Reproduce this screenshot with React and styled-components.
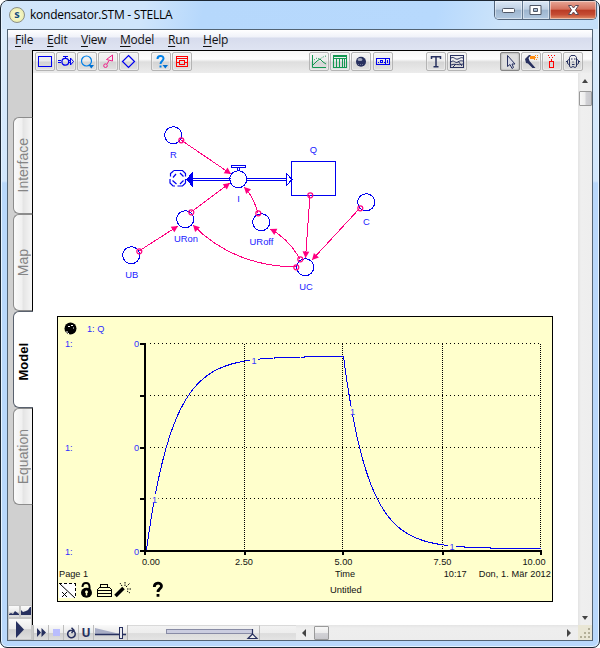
import React from 'react';
import styled, { createGlobalStyle, css } from 'styled-components';

const Global = createGlobalStyle`
  * { box-sizing: border-box; }
  body { margin: 0; background: #fff; font-family: "Liberation Sans", Arial, sans-serif; }
  svg { display: block; flex: none; }
`;

const BLUE = '#0000f0';
const PINK = '#ff0080';
const NAVY = '#27305f';
const PAPER = '#ffffcc';

const Window = styled.div`
  width: 600px;
  height: 648px;
  display: flex;
  flex-direction: column;
  padding: 0 6px 6px;
  border: 1px solid #1c2733;
  border-radius: 8px 7px 7px 7px;
  box-shadow: inset 0 0 0 1px #e6f3ff;
  background: linear-gradient(180deg, #dcecfb 0, #d2e7fc 180px, #b9d8fb 182px, #b9d8fb 100%);
  overflow: hidden;
`;

const TitleBar = styled.header`
  display: flex;
  height: 28px;
  flex: none;
  margin: 0 -5px;
  padding-left: 7px;
  background: linear-gradient(100deg, #d2e6fa 0, #cfe5fb 140px, #b6d8fc 200px, #b7d9fd 430px, #cde4fa 500px, #c4dff9 100%);
`;

const AppBadge = styled.div`
  width: 16px;
  height: 16px;
  margin-top: 6px;
  border: 1px solid #8c8f86;
  border-radius: 50%;
  background: radial-gradient(#ffffe0, #e3e69a);
  color: #15507c;
  font: bold 11px/12px "Open Sans", sans-serif;
  text-align: center;
`;

const Title = styled.h1`
  margin: 0 0 0 5px;
  font: 12px/28px "Open Sans", sans-serif;
  letter-spacing: -0.25px;
  color: #000;
  flex: 1;
`;

const Caption = styled.div`
  display: flex;
  width: 103px;
  height: 19px;
  margin-right: 1px;
  border: 1px solid #52657b;
  border-top: 0;
  border-radius: 0 0 5px 5px;
  overflow: hidden;
`;

const CaptionButton = styled.button`
  flex: ${p => (p.$close ? '0 0 47px' : '1')};
  display: flex;
  justify-content: center;
  align-items: center;
  padding: 0;
  border: 0;
  border-left: ${p => (p.$first ? '0' : '1px solid #647990')};
  box-shadow: inset 0 0 0 1px rgba(255, 255, 255, 0.45);
  background: ${p =>
    p.$close
      ? 'linear-gradient(180deg, #e7a797 0, #d4705c 46%, #b93a24 50%, #c54c34 75%, #e18e68 100%)'
      : 'linear-gradient(180deg, #dce9f7 0, #bfd0e3 46%, #9db5ce 50%, #b1c8e0 100%)'};
`;

const Client = styled.div`
  flex: 1;
  display: flex;
  flex-direction: column;
  min-height: 0;
  border: 1px solid #536474;
  background: #fff;
`;

const MenuBar = styled.nav`
  display: flex;
  height: 20px;
  flex: none;
  padding-left: 7px;
  background: linear-gradient(180deg, #fff 0, #f0f2f9 7px, #d7dced 8px, #dfe4f2 100%);
`;

const MenuItem = styled.span`
  width: ${p => p.$w}px;
  font: 12px/20px "Open Sans", sans-serif;
  letter-spacing: -0.2px;
  color: #111;
  &::first-letter { text-decoration: underline; text-underline-offset: 1.5px; }
`;

const Body = styled.div`
  flex: 1;
  display: flex;
  min-height: 0;
`;

const Sidebar = styled.aside`
  width: 25px;
  flex: none;
  display: flex;
  flex-direction: column;
  background: #d0d0d0;
`;

const TabList = styled.div`
  flex: 1;
  padding-top: 67px;
  background: linear-gradient(#000, #000) right / 1px 100% no-repeat;
`;

const Tab = styled.div`
  display: flex;
  align-items: center;
  justify-content: center;
  height: 97px;
  margin-left: 5px;
  padding-top: ${p => (p.$active ? 5 : 0)}px;
  border: 1px solid ${p => (p.$active ? '#59616e' : '#8c8c8c')};
  border-right: ${p => (p.$active ? '0' : '1px solid #000')};
  border-radius: 6px 0 0 6px;
  background: ${p => (p.$active ? '#fff' : 'linear-gradient(90deg, #fafafa 0, #f0f0f0 45%, #e4e4e4 50%, #f6f6f6 100%)')};
  span {
    writing-mode: vertical-rl;
    transform: rotate(180deg);
    font-size: ${p => (p.$active ? 13 : 14)}px;
    font-weight: ${p => (p.$active ? 'bold' : 'normal')};
    line-height: 18px;
    color: ${p => (p.$active ? '#000' : '#858585')};
  }
`;

const RunPad = styled.div`
  display: grid;
  grid-template-columns: 12px 12px;
  grid-template-rows: 13px 22px;
  background: linear-gradient(#000, #000) right top / 1px 20px no-repeat #c8c8c8;
`;

const metal = css`
  background: linear-gradient(180deg, #fafafa 0, #ebebeb 50%, #cfcfcf 53%, #dedede 100%);
`;

const PadKey = styled.button`
  ${metal}
  display: flex;
  justify-content: center;
  align-items: center;
  padding: 0;
  border: 1px solid #c6c6c6;
  grid-column: ${p => (p.$wide ? '1 / 3' : 'auto')};
`;

const Main = styled.main`
  flex: 1;
  display: flex;
  flex-direction: column;
  min-width: 0;
`;

const Toolbar = styled.div`
  display: flex;
  align-items: center;
  height: 23px;
  flex: none;
  padding: 1px 8px 2px 2px;
  border-top: 1px solid #000;
  background: linear-gradient(180deg, #f6f6f6 0, #fdfdfd 8px, #dedede 11px, #ececec 100%);
`;

const ToolGroup = styled.div`
  display: flex;
  gap: 1px;
  margin-left: ${p => p.$gap || 0}px;
`;

const ToolButton = styled.button`
  width: 20px;
  height: 19px;
  display: flex;
  justify-content: center;
  align-items: center;
  padding: 0;
  border: 1px solid ${p => (p.$pressed ? '#858585' : '#b4b4b4')};
  border-radius: 2px;
  box-shadow: ${p => (p.$pressed ? 'inset 0 0 2px #888' : 'inset 0 0 0 1px rgba(255,255,255,.35)')};
  background: ${p =>
    p.$pressed
      ? '#dedede'
      : 'linear-gradient(180deg, #f4f4f4 0, #ececec 48%, #d3d3d3 52%, #e2e2e2 100%)'};
`;

const Stage = styled.div`
  flex: 1;
  display: flex;
  min-height: 0;
`;

const Canvas = styled.div`
  position: relative;
  flex: 1;
  background: #fff;
  overflow: hidden;
`;

const Graph = styled.section`
  position: absolute;
  left: 24px;
  top: 243px;
  width: 496px;
  height: 286px;
  border: 1px solid #000;
  background: ${PAPER};
  font-size: 9.2px;
  color: #111;
`;

const GraphHead = styled.div`
  display: flex;
  align-items: center;
  height: 22px;
  padding: 1px 0 0 6px;
  gap: 10px;
  color: #2c2cff;
`;

const GraphInfo = styled.div`
  display: grid;
  grid-template-columns: 276px 1fr auto auto;
  height: 12px;
  line-height: 12px;
  padding: 0 1px;
  white-space: nowrap;
`;

const Clock = styled.span`
  margin-right: 12px;
`;

const Stamp = styled.span`
  letter-spacing: 0.08px;
`;

const GraphTools = styled.div`
  display: flex;
  align-items: center;
  height: 19px;
`;

const GraphTitle = styled.span`
  margin-left: 162px;
  padding-bottom: 1px;
  font-size: 9.4px;
`;

const VScroll = styled.div`
  display: flex;
  flex-direction: column;
  align-items: center;
  width: 14px;
  flex: none;
  padding: 5px 0 4px;
  background: linear-gradient(90deg, #e3e3e3 0, #efefef 3px, #eee 100%);
`;

const Thumb = styled.div`
  width: ${p => p.$w}px;
  height: ${p => p.$h}px;
  border: 1px solid #9a9a9a;
  border-radius: 1px;
  background: linear-gradient(${p => p.$dir}, #f7f7f7 0, #ececec 48%, #d2d2d6 52%, #c8c8cc 100%);
`;

const Spacer = styled.div`
  flex: ${p => (p.$w ? `0 0 ${p.$w}px` : '1')};
`;

const BottomBar = styled.div`
  display: flex;
  height: 15px;
  flex: none;
`;

const RunKey = styled.button`
  ${metal}
  width: 15px;
  flex: none;
  display: flex;
  align-items: center;
  justify-content: center;
  padding: 0;
  border: 0;
  border-left: 1px solid #bdbdbd;
  color: ${NAVY};
  font: bold 12px/14px "Open Sans", sans-serif;
`;

const SpeedCell = styled.div`
  ${metal}
  width: 35px;
  border-left: 1px solid #bdbdbd;
  border-right: 1px solid #b5b5b5;
`;

const TimeCell = styled.div`
  width: 132px;
  border-top: 1px solid #d9d9d9;
  border-right: 1px solid #bdbdbd;
  background: linear-gradient(180deg, #f2f2f2 0, #ededed 50%, #dcdcdc 54%, #e4e4e4 100%);
`;

const RestCell = styled(TimeCell)`
  width: 36px;
  border-right: 0;
`;

const HScroll = styled.div`
  flex: 1;
  display: flex;
  align-items: center;
  padding: 0 6px 0 5px;
  background: linear-gradient(180deg, #e4e4e4 0, #eee 3px, #ededed 100%);
`;

const Grip = styled.div`
  width: 14px;
  background: #e9e6d5;
`;

const Icon = ({ children, w = 16, h = 15, s = BLUE }) => (
  <svg width={w} height={h} viewBox={`0 0 ${w} ${h}`} fill="none" stroke={s} strokeWidth="1">
    {children}
  </svg>
);

const icons = {
  stock: <Icon><rect x="1.5" y="2.5" width="13" height="10" shapeRendering="crispEdges" /></Icon>,
  flow: (
    <Icon>
      <path d="M0 6.5h3M0 8.5h3M11 6.5h2M11 8.5h2M5 2.5h5M7.5 2.5v2M12.5 4v7l3-3.5z" />
      <circle cx="7.3" cy="7.8" r="3.4" strokeWidth="1.3" />
    </Icon>
  ),
  converter: (
    <Icon s="#0080e8">
      <circle cx="7.5" cy="7" r="5" strokeWidth="1.2" />
      <path d="M9.5 11h5.5l-2.7 3.5z" fill="#0070d0" stroke="none" />
    </Icon>
  ),
  connector: (
    <Icon s="#ee2088">
      <path d="M12.5 1v6L6.500 5.500zM9 6.500 7 10" />
      <circle cx="5.5" cy="11.7" r="1.8" />
    </Icon>
  ),
  decision: <Icon><path d="M7.5 1.5 13.5 7.5 7.5 13.5 1.5 7.5z" strokeWidth="1.2" /></Icon>,
  help: (
    <Icon s="#0080e8">
      <path d="M4.5 5c0-4 6-4 6-.5 0 2.5-3 2.5-3 5.500M7.5 11.5v2" strokeWidth="2" />
      <path d="M9.5 11h5.5l-2.7 3.5z" fill="#0070d0" stroke="none" />
    </Icon>
  ),
  frame: (
    <Icon s="#f00">
      <path d="M2.5 2.5h11v10h-11zM2 4.5h12M5.5 6.5h5v4h-5zM3 8.5h3M10 8.5h3" shapeRendering="crispEdges" />
    </Icon>
  ),
  graph: (
    <Icon s="#149852">
      <path d="M1.5 1v12.500H15M2 11l4-4 3-2 3 3 3 2" />
      <path d="M3 6l3-2 3 1 3-2 3-1" strokeDasharray="1 1.5" />
    </Icon>
  ),
  table: (
    <Icon s="#149852">
      <path d="M1.5 1.5h13v12h-13zM1 4.5h14M4.5 5v8M7.5 5v8M10.5 5v8M12.5 5v8M1 2.5h14" shapeRendering="crispEdges" />
    </Icon>
  ),
  knob: (
    <Icon s="none">
      <circle cx="8" cy="7.7" r="5" fill={NAVY} />
      <ellipse cx="7" cy="5.5" rx="2.5" ry="1.6" fill="#a4a9bf" />
      <path d="M5 10.5h6" stroke="#6c7390" strokeDasharray="1 1" />
    </Icon>
  ),
  numeric: (
    <Icon>
      <path d="M1.5 4.5h13v6h-13zM10.5 4.5v6M12.5 6v3" shapeRendering="crispEdges" />
      <path d="M3 8.5h1M5.5 6.500h2v2h-2zM8.500 8.500h1" shapeRendering="crispEdges" />
    </Icon>
  ),
  text: (
    <Icon s={NAVY}>
      <path d="M3.5 5V2.800h9V5M8 3v10M5.500 12.800h5" strokeWidth="1.5" />
    </Icon>
  ),
  picture: (
    <Icon s={NAVY}>
      <path d="M1.5 1.5h13v12h-13z" shapeRendering="crispEdges" />
      <path d="M2 4c3-2 4 2 7 1s3-2 5-1M2 8c3-3 4 2 7 0s3-1 5-1M2 11c4-2 7 1 12-1M4 13l3-3M9 7l4 5" />
    </Icon>
  ),
  arrow: <Icon s={NAVY}><path d="M5.5 1.5v11l2.5-2 2 4 1.5-1-1.5-3.500h3z" fill="#d8dae5" /></Icon>,
  brush: (
    <Icon s="none">
      <path d="M2 5 6 1h2L5.500 4l1 3 6 7h-3L5 9.500 3 9z" fill={NAVY} />
      <path d="M7 2h5v3H7z" fill="#ff8c10" />
      <path d="M12 1.5h3M12 3.5h3M11 5.5h3" stroke="#ff8c10" strokeDasharray="1 1" />
    </Icon>
  ),
  dynamite: (
    <Icon s="#f00">
      <path d="M5.5 7.5h4v6h-4zM7.5 5v2" shapeRendering="crispEdges" />
      <path d="M4 1.5h8M5 3.5h6" strokeDasharray="1 2" shapeRendering="crispEdges" />
    </Icon>
  ),
  ghost: (
    <Icon s={NAVY}>
      <path d="M4.5 12.5v-9l1.5-2h4l1.500 2v9l-1.500 1-2-1-2 1zM4 5.500l-1.500 1v3l1.500 1M12 5.500l1.500 1v3l-1.500 1M1 7.500h1.500M13.500 7.500H15" />
      <path d="M6 5h1.500M9 5h1.500M7.500 8h1M7 10.500h2.500" />
    </Icon>
  ),
};

const Tool = ({ name, pressed }) => (
  <ToolButton $pressed={pressed} aria-label={name}>{icons[name]}</ToolButton>
);

function arrowHead(tx, ty, fx, fy) {
  const a = Math.atan2(ty - fy, tx - fx);
  const pt = (l, w) => `${tx - l * Math.cos(a) - w * Math.sin(a)},${ty - l * Math.sin(a) + w * Math.cos(a)}`;
  return `${tx},${ty} ${pt(6.5, 3.4)} ${pt(6.5, -3.4)}`;
}

// Each connector runs from its small ring (x1, y1) to the arrow tip (x2, y2); c is the bend.
const links = [
  { x1: 181, y1: 140, x2: 231, y2: 174 },
  { x1: 191, y1: 212, x2: 230, y2: 183 },
  { x1: 139, y1: 251, x2: 178, y2: 226 },
  { x1: 258, y1: 213, x2: 244, y2: 187, c: [253, 196] },
  { x1: 300, y1: 259, x2: 270, y2: 229, c: [288, 238] },
  { x1: 296, y1: 267, x2: 193, y2: 225, c: [233, 266] },
  { x1: 310, y1: 195, x2: 305.5, y2: 258 },
  { x1: 360, y1: 208, x2: 312, y2: 260 },
];

const nodes = [
  { x: 173, y: 135, label: 'R', lx: 173.5, ly: 158 },
  { x: 238, y: 179, label: 'I', lx: 238.5, ly: 202 },
  { x: 366, y: 202, label: 'C', lx: 366.5, ly: 225 },
  { x: 185, y: 219, label: 'URon', lx: 186, ly: 242 },
  { x: 261, y: 222, label: 'URoff', lx: 261.5, ly: 245 },
  { x: 131, y: 255, label: 'UB', lx: 131.8, ly: 278 },
  { x: 305, y: 267, label: 'UC', lx: 306, ly: 290 },
];

const Diagram = () => (
  <svg width="545" height="243" viewBox="33 73 545 243" fill="none" fontFamily='"Liberation Sans", Arial, sans-serif' fontSize="9.4">
    <g stroke={BLUE} shapeRendering="crispEdges">
      <path d="M192 178.5h39M192 180.5h39M246 178.5h40M246 180.5h40" />
      <path d="M231.5 165.5h14v2h-14zM237.5 168v2.500M239.5 168v2.500" />
      <path d="M286.5 173.5v12l5.500-6z" fill="#fff" />
      <path d="M192.5 173v13l-6-6.500z" fill={BLUE} />
      <rect x="291.5" y="161.5" width="44" height="34" />
    </g>
    <g stroke={BLUE} strokeWidth="1.2">
      <path d="M173.5 170.5h9l3 3v3M185.5 179v4l-3 3h-5M175 186h-2l-3-3v-4M170.500 176.500v-3l3-2.500" />
      <path d="M173 177.5l3-3.500M180 173l3.500 3.500M172.500 180.500l4 3.500M180 184l3.500-3.500" />
    </g>
    {nodes.map(n => (
      <g key={n.label}>
        <circle cx={n.x + 0.2} cy={n.y + 0.2} r="8.5" stroke={BLUE} shapeRendering="crispEdges" />
        <text x={n.lx} y={n.ly} fill="#2020ff" textAnchor="middle">{n.label}</text>
      </g>
    ))}
    <text x="313.5" y="153" fill="#2020ff" textAnchor="middle">Q</text>
    {links.map((l, i) => {
      const [cx, cy] = l.c || [(l.x1 + l.x2) / 2, (l.y1 + l.y2) / 2];
      return (
        <g key={i} stroke={PINK}>
          <path d={`M${l.x1} ${l.y1}Q${cx} ${cy} ${l.x2} ${l.y2}`} shapeRendering="crispEdges" />
          <circle cx={l.x1 + 0.3} cy={l.y1 + 0.3} r="2.5" strokeWidth="1.2" />
          <polygon points={arrowHead(l.x2, l.y2, cx, cy)} fill={PINK} stroke="none" />
        </g>
      );
    })}
  </svg>
);

const curve = (() => {
  const pts = [];
  for (let x = 0; x <= 197; x += 1) pts.push([146.5 + x, 550 - 193.5 * (1 - Math.exp(-x / 26.2))]);
  for (let x = 0; x <= 197; x += 1) pts.push([343.5 + x, 548.5 - 192 * Math.exp(-x / 25)]);
  return pts.map(p => p.map(v => v.toFixed(1)).join(',')).join(' ');
})();

const Plot = () => (
  <svg width="494" height="229" viewBox="58 339 494 229" fontFamily='"Liberation Sans", Arial, sans-serif' fontSize="9.2">
    <g stroke="#000" shapeRendering="crispEdges">
      {[343, 395, 447, 498].map(y => <path key={y} d={`M150 ${y + 0.5}H541`} strokeDasharray="1 3" />)}
      {[244, 342, 442, 540].map(x => <path key={x} d={`M${x + 0.5} 344V550`} strokeDasharray="1 1" />)}
      <path d="M145 343V555M144 551H541" strokeWidth="2" />
      <path d="M140 344h5M140 396h5M140 448h5M140 499h5M140 551h5M245 551v4M343 551v4M443 551v4M541 550v5" strokeWidth="2" />
    </g>
    <polyline points={curve} fill="none" stroke={BLUE} shapeRendering="crispEdges" />
    {[[154.5, 499], [254, 360], [352.5, 411.5], [452, 546.5]].map(([x, y]) => (
      <g key={x}>
        <rect x={x - 4} y={y - 5} width="8" height="8.5" fill={PAPER} />
        <text x={x} y={y + 3.5} textAnchor="middle" fill="#3535ff">1</text>
      </g>
    ))}
    {[347, 451, 555].map(y => (
      <g key={y} fill="#3030ff">
        <text x="65" y={y}>1:</text>
        <text x="134" y={y}>0</text>
      </g>
    ))}
    <g fill="#111">
      <text x="142" y="565">0.00</text>
      <text x="235" y="565">2.50</text>
      <text x="334.5" y="565">5.00</text>
      <text x="433.5" y="565">7.50</text>
      <text x="522.5" y="565">10.00</text>
    </g>
  </svg>
);

const Pages = () => (
  <svg width="110" height="19" viewBox="58 581 110 19" fill="none" stroke="#000">
    <rect x="59" y="584" width="17" height="15" fill="#fff" stroke="none" />
    <path d="M59 584.5h17M75.5 584v15" strokeDasharray="3 2" />
    <path d="M60 585l15 14M62 593l5 5M67 593l-5 5" />
    <path d="M82.5 588c0-5.500 7-5.500 7 0v3" strokeWidth="2" />
    <ellipse cx="86.5" cy="593.8" rx="5.5" ry="5" fill="#000" stroke="none" />
    <path d="M86.5 591.500v5M85 593h3" stroke={PAPER} strokeWidth="1.5" />
    <path d="M97.5 590.5l2-2h10l2 2v7h-14zM100.5 588v-2.500h7v2.500M98 591.500h13M98 594.500h13" shapeRendering="crispEdges" />
    <path d="M115.5 597l8-8" strokeWidth="3.5" />
    <path d="M125 587v-4M126 588l4-4M127 590h4M122 587l-2-3M127 592l3 2" strokeDasharray="1.5 1" />
    <path d="M154.3 588c0-5 7.200-5 7.200-1 0 2.800-3.500 2.500-3.500 6M158 595v2.800" strokeWidth="2.8" />
  </svg>
);

const Chevron = ({ d, w = 6, h = 6 }) => (
  <svg width={w} height={h} viewBox={`0 0 ${w} ${h}`}><path d={d} fill="#444" /></svg>
);

const menus = [['File', 32], ['Edit', 34], ['View', 39], ['Model', 48], ['Run', 35], ['Help', 30]];

export default function App() {
  return (
    <>
      <Global />
      <Window>
        <TitleBar>
          <AppBadge>s</AppBadge>
          <Title>kondensator.STM - STELLA</Title>
          <Caption>
            <CaptionButton $first aria-label="Minimize">
              <svg width="13" height="7"><rect x=".5" y="1.5" width="12" height="4" rx="1" fill="#fff" stroke="#4e5665" /></svg>
            </CaptionButton>
            <CaptionButton aria-label="Maximize">
              <svg width="13" height="11"><path d="M1 .5h11v9H1zM4.5 3.5h4v3h-4z" fill="#fff" fillRule="evenodd" stroke="#4e5665" /></svg>
            </CaptionButton>
            <CaptionButton $close aria-label="Close">
              <svg width="13" height="12"><path d="M1.5 1.5h3l2 2.500 2-2.500h3L8.500 6l3 4.500h-3l-2-2.500-2 2.500h-3L4.500 6z" fill="#fff" stroke="#5a4a55" /></svg>
            </CaptionButton>
          </Caption>
        </TitleBar>
        <Client>
          <MenuBar>
            {menus.map(([m, w]) => <MenuItem key={m} $w={w}>{m}</MenuItem>)}
          </MenuBar>
          <Body>
            <Sidebar>
              <TabList>
                <Tab><span>Interface</span></Tab>
                <Tab><span>Map</span></Tab>
                <Tab $active><span>Model</span></Tab>
                <Tab><span>Equation</span></Tab>
              </TabList>
              <RunPad>
                <PadKey aria-label="Small scale"><svg width="10" height="9"><path d="M0 8V7l2-1 2 1 2-3 4 3v1z" fill={NAVY} /></svg></PadKey>
                <PadKey aria-label="Large scale"><svg width="10" height="9"><path d="M0 8V3l2 2 3-1 2-1 2-3h1v8z" fill={NAVY} /></svg></PadKey>
                <PadKey $wide aria-label="Run"><svg width="10" height="17"><path d="M1 0l8 8.500L1 17z" fill={NAVY} /></svg></PadKey>
              </RunPad>
            </Sidebar>
            <Main>
              <Toolbar>
                <ToolGroup>
                  <Tool name="stock" /><Tool name="flow" /><Tool name="converter" /><Tool name="connector" /><Tool name="decision" />
                </ToolGroup>
                <ToolGroup $gap={12}><Tool name="help" /><Tool name="frame" /></ToolGroup>
                <ToolGroup $gap={117}><Tool name="graph" /><Tool name="table" /><Tool name="knob" /></ToolGroup>
                <ToolGroup $gap={2}><Tool name="numeric" /></ToolGroup>
                <ToolGroup $gap={33}><Tool name="text" /><Tool name="picture" /></ToolGroup>
                <ToolGroup $gap={33}>
                  <Tool name="arrow" pressed /><Tool name="brush" /><Tool name="dynamite" /><Tool name="ghost" />
                </ToolGroup>
              </Toolbar>
              <Stage>
                <Canvas>
                  <Diagram />
                  <Graph>
                    <GraphHead>
                      <svg width="13" height="13">
                        <circle cx="6.5" cy="6.5" r="6" fill="#000" />
                        <path d="M4 4.5h2M7 3.5h2M9 6h1M2 10h2M4 11.5h1" stroke="#fff" />
                      </svg>
                      <span>1: Q</span>
                    </GraphHead>
                    <Plot />
                    <GraphInfo>
                      <span>Page 1</span>
                      <span>Time</span>
                      <Clock>10:17</Clock>
                      <Stamp>Don, 1. Mär 2012</Stamp>
                    </GraphInfo>
                    <GraphTools>
                      <Pages />
                      <GraphTitle>Untitled</GraphTitle>
                    </GraphTools>
                  </Graph>
                </Canvas>
                <VScroll>
                  <Chevron d="M0 5 3 1l3 4z" />
                  <Spacer $w={7} />
                  <Thumb $w={13} $h={15} $dir="90deg" />
                  <Spacer />
                  <Chevron d="M0 1h6L3 5z" />
                </VScroll>
              </Stage>
              <BottomBar>
                <RunKey aria-label="Step"><svg width="9" height="9"><path d="M0 0l4 4.500L0 9zM4.5 0l4.500 4.500L4.500 9z" fill={NAVY} /></svg></RunKey>
                <RunKey aria-label="Stop"><svg width="7" height="7"><rect width="7" height="7" fill="#b9bdfd" /></svg></RunKey>
                <RunKey aria-label="Repeat">
                  <svg width="11" height="12" fill="none" stroke={NAVY} strokeWidth="1.5"><path d="M8 4.200a3.800 3.800 0 1 1-4-.700H8M5.500 .8l2.500 2.500L5.500 6" /></svg>
                </RunKey>
                <RunKey>U</RunKey>
                <SpeedCell>
                  <svg width="33" height="15">
                    <path d="M1 3l25 6H1z" fill="#a9aec6" />
                    <path d="M1 9.5h31" stroke={NAVY} strokeWidth="1.5" />
                    <rect x="25.5" y="2.5" width="3" height="11" fill="#e7e8ee" stroke={NAVY} />
                  </svg>
                </SpeedCell>
                <TimeCell>
                  <svg width="131" height="14">
                    <rect x="38.5" y="3.5" width="86" height="4" fill="#cbcde0" stroke="#888ba5" />
                    <path d="M124.5 3v5l4.500 4.500h-9l4.500-4.500" fill="#eee" stroke={NAVY} strokeWidth="1.2" />
                  </svg>
                </TimeCell>
                <RestCell />
                <HScroll>
                  <Chevron w={5} h={8} d="M5 0v8L1 4z" />
                  <Spacer $w={8} />
                  <Thumb $w={15} $h={14} $dir="180deg" />
                  <Spacer />
                  <Chevron w={5} h={8} d="M0 0v8l4-4z" />
                </HScroll>
                <Grip>
                  <svg width="14" height="15">
                    <path d="M10 4h2M6 8h2M10 8h2M2 12h2M6 12h2M10 12h2" stroke="#b3af98" strokeWidth="2" />
                  </svg>
                </Grip>
              </BottomBar>
            </Main>
          </Body>
        </Client>
      </Window>
    </>
  );
}
